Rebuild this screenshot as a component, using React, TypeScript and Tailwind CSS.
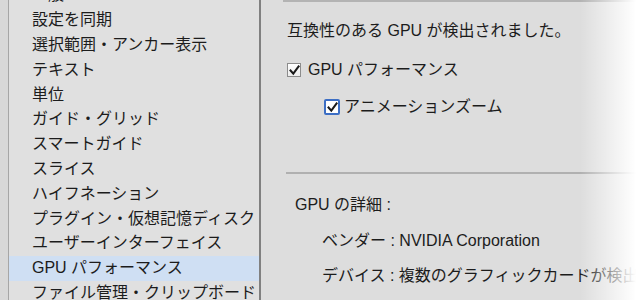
const font = { fontFamily: '"Liberation Sans", "Noto Sans CJK JP", sans-serif' }

const items = [
  '一般',
  '設定を同期',
  '選択範囲・アンカー表示',
  'テキスト',
  '単位',
  'ガイド・グリッド',
  'スマートガイド',
  'スライス',
  'ハイフネーション',
  'プラグイン・仮想記憶ディスク',
  'ユーザーインターフェイス',
  'GPU パフォーマンス',
  'ファイル管理・クリップボード',
]

function CheckBox({ focused = false }: { focused?: boolean }) {
  return (
    <span
      className={
        focused
          ? 'flex items-center justify-center w-[16px] h-[16px] rounded-[2px] border-2 border-[#3c6ec4] bg-white shrink-0'
          : 'flex items-center justify-center w-[14px] h-[14px] border border-[#8c8c8c] bg-gradient-to-b from-white to-[#ececec] shrink-0'
      }
    >
      <svg width="11" height="11" viewBox="0 0 11 11">
        <path d="M1.5 5.5 L4.3 8.6 L9.6 1.4" fill="none" stroke="#1a1a1a" strokeWidth="2" strokeLinecap="square" />
      </svg>
    </span>
  )
}

export default function App() {
  return (
    <div className="relative flex w-[636px] h-[300px] overflow-hidden bg-[#d8d8d8] text-[16px] text-[#1c1c1c]" style={font}>
      {/* outer margin */}
      <div className="w-[8px] shrink-0" />

      {/* category list */}
      <div className="w-[253px] shrink-0 bg-[#e0e0e0] border-l border-[#a6a6a6] border-r-2 border-r-[#808080]">
        <div className="-mt-[17px] flex flex-col">
          {items.map((label) => (
            <div
              key={label}
              className={
                label === 'GPU パフォーマンス'
                  ? 'h-[24.8px] flex items-center pl-[23px] bg-[#cfdff3] whitespace-nowrap'
                  : 'h-[24.8px] flex items-center pl-[23px] whitespace-nowrap'
              }
            >
              {label}
            </div>
          ))}
        </div>
      </div>

      {/* settings panel */}
      <div className="flex-1 flex flex-col bg-[#dddddd]">
        <div className="ml-[22px] h-[2px] bg-[#b3b3b3]" />

        <div className="pl-[26px]">
          <div className="mt-[19px] h-5 flex items-center whitespace-nowrap">互換性のある GPU が検出されました。</div>

          <div className="mt-[19px] h-5 flex items-center gap-[7px] whitespace-nowrap">
            <CheckBox />
            <span>GPU パフォーマンス</span>
          </div>

          <div className="mt-[17px] h-5 flex items-center gap-[4px] pl-[37px] whitespace-nowrap">
            <CheckBox focused />
            <span>アニメーションズーム</span>
          </div>
        </div>

        <div className="mt-[55px] ml-[25px] h-[2px] bg-[#b0b0b0]" />

        <div className="pl-[34px]">
          <div className="mt-[21px] h-5 flex items-center whitespace-nowrap">GPU の詳細 :</div>
          <div className="mt-[16px] h-5 flex items-center pl-[27px] whitespace-nowrap">ベンダー : NVIDIA Corporation</div>
          <div className="mt-[15px] h-5 flex items-center pl-[27px] whitespace-nowrap">デバイス : 複数のグラフィックカードが検出されました</div>
        </div>
      </div>

      {/* right edge fade */}
      <div className="pointer-events-none absolute top-0 right-0 h-full w-[56px] bg-gradient-to-r from-transparent to-white" />
    </div>
  )
}
